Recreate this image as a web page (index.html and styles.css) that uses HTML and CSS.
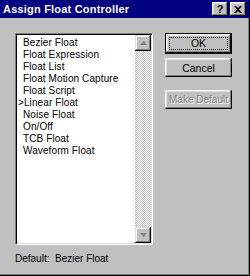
FILE: index.html
```html
<!DOCTYPE html>
<html lang="en">

<head>
    <meta charset="UTF-8">
    <title>Assign Float Controller</title>
    <link rel="stylesheet" href="styles.css">
</head>

<body>
    <div class="dialog">
        <!-- title bar -->
        <div class="dialog-title">
            <span class="title-text">Assign Float Controller</span>
            <div class="title-buttons">
                <span class="title-btn">?</span>
                <span class="title-btn title-close">
                    <svg width="8" height="7" viewBox="0 0 8 7"><path d="M0 0h2l2 2 2-2h2L5 3.5 8 7H6L4 5 2 7H0l3-3.5z" fill="#000"/></svg>
                </span>
            </div>
        </div>

        <div class="dialog-body">
            <div class="dialog-main">
                <div class="listbox">
                    <ul class="list-items">
                        <li>Bezier Float</li>
                        <li>Float Expression</li>
                        <li>Float List</li>
                        <li>Float Motion Capture</li>
                        <li>Float Script</li>
                        <li class="current">&gt;Linear Float</li>
                        <li>Noise Float</li>
                        <li>On/Off</li>
                        <li>TCB Float</li>
                        <li>Waveform Float</li>
                    </ul>
                    <div class="scrollbar">
                        <span class="scroll-btn">
                            <svg width="7" height="4" viewBox="0 0 7 4"><path d="M3.5 0L7 4H0z" fill="#808080"/></svg>
                        </span>
                        <span class="scroll-track"></span>
                        <span class="scroll-btn">
                            <svg width="7" height="4" viewBox="0 0 7 4"><path d="M0 0h7L3.5 4z" fill="#808080"/></svg>
                        </span>
                    </div>
                </div>

                <div class="button-col">
                    <a href="javascript:;" class="btn btn-default"><span class="focus">OK</span></a>
                    <a href="javascript:;" class="btn">Cancel</a>
                    <a href="javascript:;" class="btn btn-disabled">Make Default</a>
                </div>
            </div>

            <div class="default-line">Default:&nbsp; Bezier Float</div>
        </div>
    </div>
</body>

</html>
```

FILE: styles.css
```css
/* reset */

ul,
li,
div,
span,
a {
    padding: 0px;
    margin: 0px;
}

body {
    margin: 0px;
    width: 250px;
    height: 276px;
    overflow: hidden;
    background: #c0c0c0;
    font-family: "Liberation Sans", Arial, sans-serif;
    font-size: 10px;
    color: #000;
}

a {
    text-decoration: none;
    color: #000;
}

/* window frame, cropped on the left and top */

.dialog {
    width: 250px;
    height: 276px;
    box-sizing: border-box;
    border-right: 1px solid #000;
    border-bottom: 1px solid #000;
    box-shadow: inset -1px -1px #808080;
    display: flex;
    flex-direction: column;
}

/* title bar */

.dialog-title {
    height: 18px;
    background: #000080;
    color: #fff;
    display: flex;
    align-items: center;
    justify-content: space-between;
    padding: 0px 3px 0px 3px;
}

.title-text {
    font-weight: bold;
    font-size: 11px;
    letter-spacing: 0.2px;
}

.title-buttons {
    display: flex;
    gap: 2px;
}

.title-btn {
    width: 16px;
    height: 14px;
    box-sizing: border-box;
    background: #c0c0c0;
    color: #000;
    font-weight: bold;
    font-size: 11px;
    line-height: 14px;
    text-align: center;
    box-shadow: inset -1px -1px #000, inset 1px 1px #fff, inset -2px -2px #808080, inset 2px 2px #dfdfdf;
    display: flex;
    align-items: center;
    justify-content: center;
}

/* body */

.dialog-body {
    flex: 1;
    padding: 15px 0px 0px 15px;
    display: flex;
    flex-direction: column;
}

.dialog-main {
    display: flex;
    gap: 12px;
}

/* list box */

.listbox {
    width: 138px;
    height: 212px;
    box-sizing: border-box;
    border: 1px solid;
    border-color: #808080 #fff #fff #808080;
    background: #fff;
    display: flex;
    padding: 1px;
    box-shadow: inset 1px 1px #000, inset -1px -1px #dfdfdf;
}

.list-items {
    flex: 1;
    list-style: none;
    padding: 2px 0px 0px 6px;
}

.list-items li {
    height: 12px;
    line-height: 12px;
    white-space: nowrap;
    letter-spacing: 0.1px;
}

.list-items li.current {
    margin-left: -5px;
}

.scrollbar {
    width: 16px;
    display: flex;
    flex-direction: column;
    background: repeating-conic-gradient(#fff 0 25%, #c0c0c0 0 50%) 0 0 / 2px 2px;
}

.scroll-btn {
    height: 16px;
    background: #c0c0c0;
    box-sizing: border-box;
    box-shadow: inset -1px -1px #000, inset 1px 1px #dfdfdf, inset -2px -2px #808080, inset 2px 2px #fff;
    display: flex;
    align-items: center;
    justify-content: center;
}

.scroll-track {
    flex: 1;
}

/* push buttons */

.button-col {
    width: 67px;
    display: flex;
    flex-direction: column;
    gap: 4px;
}

.btn {
    height: 19px;
    box-sizing: border-box;
    display: flex;
    align-items: center;
    justify-content: center;
    font-size: 10.5px;
    background: #c0c0c0;
    box-shadow: inset -1px -1px #000, inset 1px 1px #fff, inset -2px -2px #808080, inset 2px 2px #dfdfdf;
}

.btn-default {
    height: 21px;
    border: 1px solid #000;
}

.btn-default .focus {
    width: 57px;
    height: 11px;
    line-height: 11px;
    text-align: center;
    border: 1px dotted #000;
}

.btn-disabled {
    margin-top: 9px;
    font-size: 10px;
    color: #808080;
    text-shadow: 1px 1px #fff;
}

/* footer text */

.default-line {
    margin-top: 8px;
    height: 12px;
    line-height: 12px;
}
```
